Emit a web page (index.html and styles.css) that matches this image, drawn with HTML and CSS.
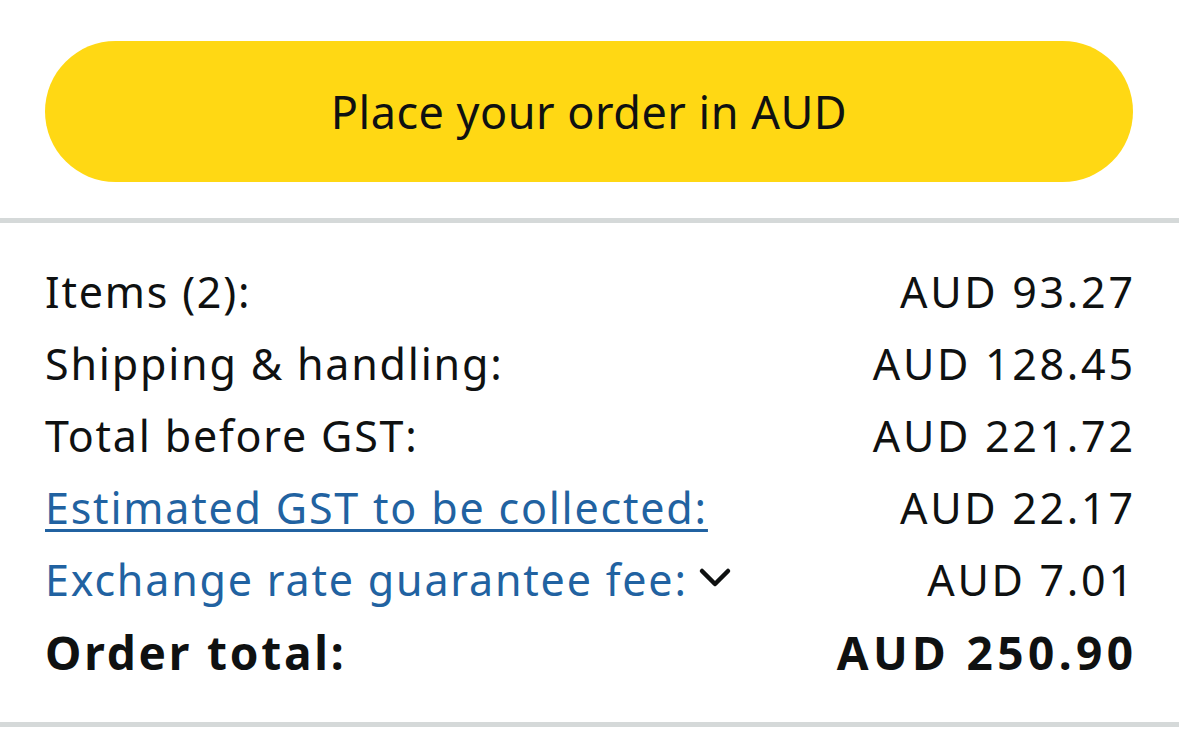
FILE: index.html
```html
<html>
	<head>
		<link rel="stylesheet" href="styles.css">
	</head>
	<body>

		<div class="botonContainer">
			<button class="botonPedido">Place your order in AUD</button>
		</div>

		<div class="resumen">
			<div class="fila">
				<span>Items (2):</span>
				<span class="monto">AUD 93.27</span>
			</div>
			<div class="fila">
				<span>Shipping &amp; handling:</span>
				<span class="monto">AUD 128.45</span>
			</div>
			<div class="fila">
				<span>Total before GST:</span>
				<span class="monto">AUD 221.72</span>
			</div>
			<div class="fila">
				<a class="link subrayado" href="#">Estimated GST to be collected:</a>
				<span class="monto">AUD 22.17</span>
			</div>
			<div class="fila">
				<span class="link">Exchange rate guarantee fee:<svg class="chevron" width="34" height="24" viewBox="0 0 34 24">
						<path d="M4 5 L17 18 L30 5" fill="none" stroke="#0f1111" stroke-width="4.5" stroke-linecap="round" stroke-linejoin="round"/>
					</svg></span>
				<span class="monto">AUD 7.01</span>
			</div>
			<div class="fila total">
				<span>Order total:</span>
				<span class="monto">AUD 250.90</span>
			</div>
		</div>

	</body>
</html>
```

FILE: styles.css
```css
body {
	margin: 0;
	background: #ffffff;
	color: #0f1111;
	font-family: "Noto Sans", "DejaVu Sans", sans-serif;
}

.botonContainer {
	padding: 41px 46px 36px 45px;
	border-bottom: 5px solid #d5d9d9;
}

.botonPedido {
	display: block;
	width: 100%;
	height: 141px;
	border: none;
	border-radius: 71px;
	background: #ffd814;
	color: #0f1111;
	font-family: inherit;
	font-size: 45px;
	letter-spacing: 0.5px;
}

.resumen {
	padding: 33px 46px 34px 45px;
	border-bottom: 5px solid #d5d9d9;
}

.fila {
	display: flex;
	justify-content: space-between;
	align-items: center;
	font-size: 43px;
	letter-spacing: 1.8px;
	line-height: 72px;
	height: 72px;
}

.monto {
	letter-spacing: 2.7px;
	margin-right: -2.7px;
}

.link {
	color: #2162a1;
	text-decoration: none;
}

.subrayado {
	text-decoration: underline;
	text-decoration-thickness: 3px;
	text-underline-offset: 5px;
}

.chevron {
	margin-left: 10px;
	vertical-align: 6px;
}

.total {
	font-weight: bold;
	font-size: 46px;
	letter-spacing: 2.8px;
}

.total .monto {
	letter-spacing: 4.4px;
	margin-right: -4.4px;
}
```
